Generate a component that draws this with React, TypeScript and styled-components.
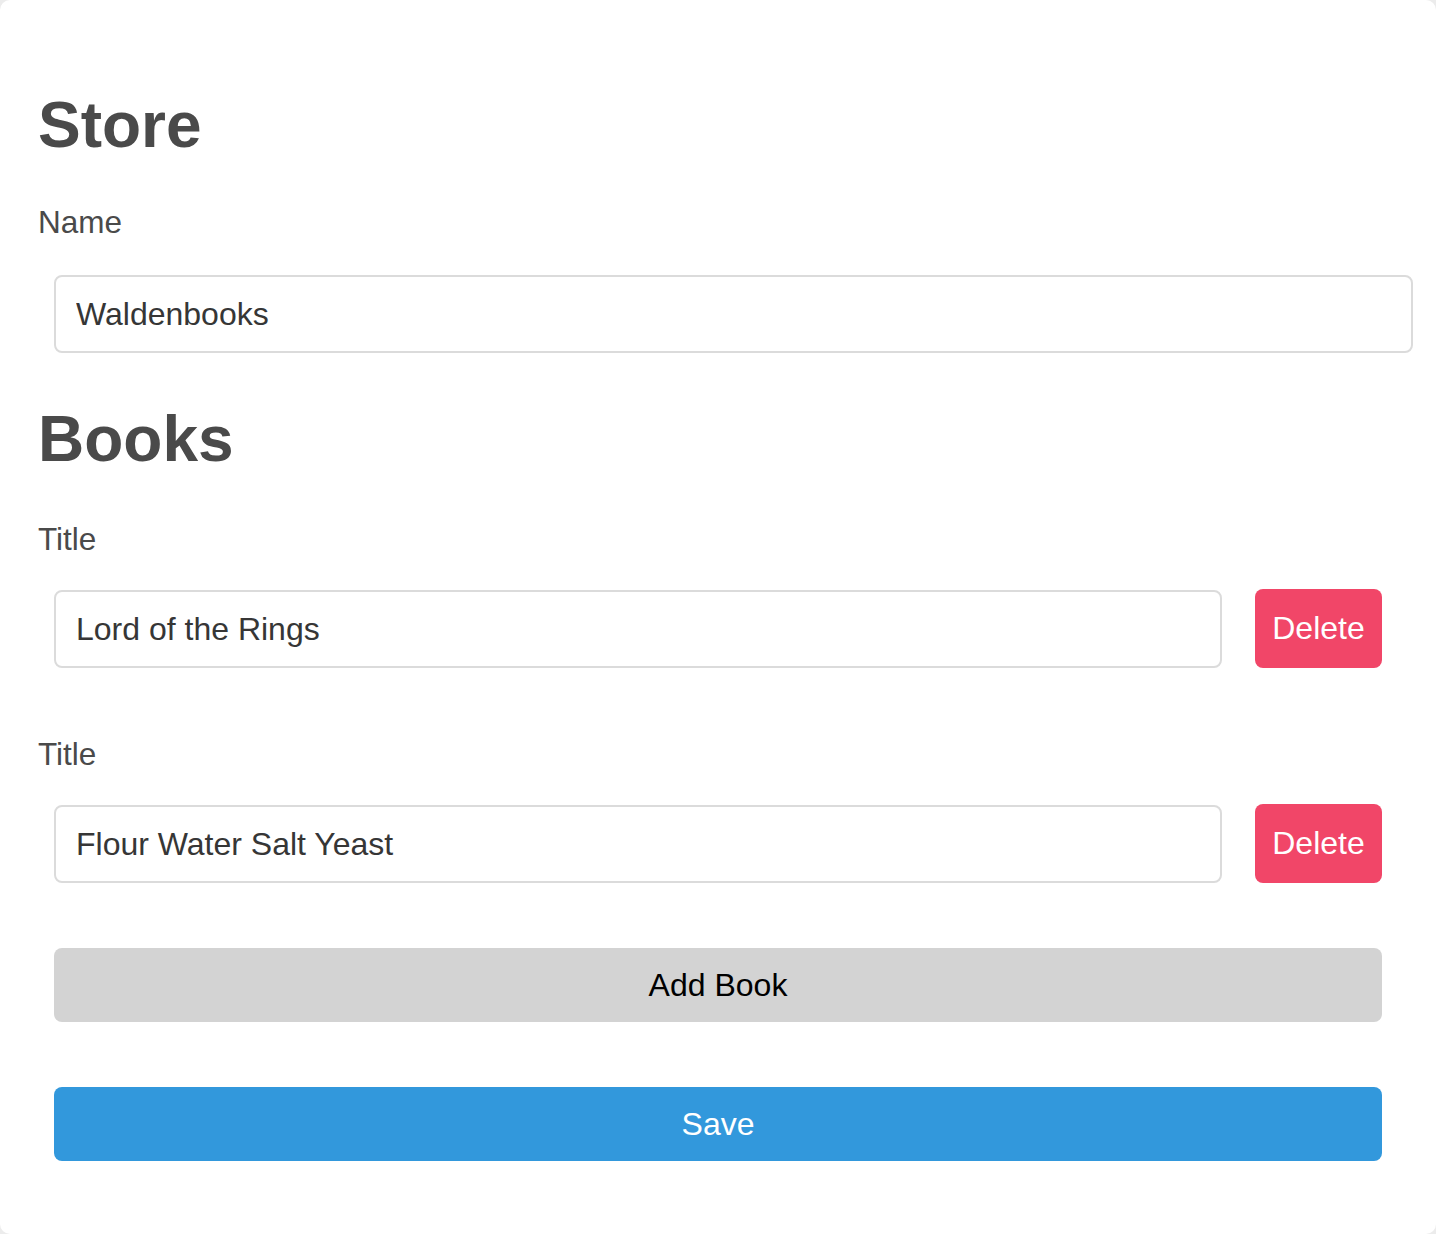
import React, { useState } from "react";
import styled, { createGlobalStyle } from "styled-components";

const GlobalStyle = createGlobalStyle`
  html, body {
    margin: 0;
    padding: 0;
    background: #ececec;
  }
  * { box-sizing: border-box; }
`;

const Card = styled.main`
  min-height: 100vh;
  background: #ffffff;
  border-radius: 10px;
  padding: 89px 23px 73px 38px;
  font-family: "Liberation Sans", Arial, Helvetica, sans-serif;
`;

const Heading = styled.h1<{ $gap: number }>`
  margin: 0 0 ${(p) => p.$gap}px;
  font-size: 64px;
  line-height: 72px;
  font-weight: 700;
  color: #4a4a4a;
`;

const Label = styled.label<{ $gap: number }>`
  display: block;
  margin: 0 0 ${(p) => p.$gap}px;
  font-size: 31.5px;
  line-height: 44px;
  color: #4a4a4a;
`;

const Indented = styled.div<{ $right: number; $gap: number }>`
  margin: 0 ${(p) => p.$right}px ${(p) => p.$gap}px 16px;
`;

const TextInput = styled.input`
  display: block;
  width: 100%;
  height: 78px;
  padding: 1px 20px 0;
  border: 2px solid #dbdbdb;
  border-radius: 8px;
  background: #fff;
  font-family: inherit;
  font-size: 32px;
  color: #363636;
  outline: none;
`;

const BookRow = styled.div`
  display: flex;
  align-items: center;
  gap: 33px;
`;

const DeleteButton = styled.button`
  flex-shrink: 0;
  height: 79px;
  width: 127px;
  padding: 0;
  border: none;
  border-radius: 8px;
  background: #f14668;
  color: #ffffff;
  font-family: inherit;
  font-size: 32px;
  cursor: pointer;
`;

const WideButton = styled.button<{ $variant: "add" | "save" }>`
  display: block;
  width: 100%;
  height: 74px;
  border: none;
  border-radius: 8px;
  background: ${(p) => (p.$variant === "save" ? "#3298dc" : "#d3d3d3")};
  color: ${(p) => (p.$variant === "save" ? "#ffffff" : "#000000")};
  font-family: inherit;
  font-size: 32px;
  cursor: pointer;
`;

export default function App() {
  const [name, setName] = useState("Waldenbooks");
  const [books, setBooks] = useState(["Lord of the Rings", "Flour Water Salt Yeast"]);

  return (
    <>
      <GlobalStyle />
      <Card>
        <Heading $gap={39}>Store</Heading>
        <Label $gap={31}>Name</Label>
        <Indented $right={0} $gap={50}>
          <TextInput value={name} onChange={(e) => setName(e.target.value)} />
        </Indented>
        <Heading $gap={42}>Books</Heading>
        {books.map((b, i) => (
          <React.Fragment key={i}>
            <Label $gap={28}>Title</Label>
            <Indented $right={31} $gap={i === books.length - 1 ? 65 : 64}>
              <BookRow>
                <TextInput
                  value={b}
                  onChange={(e) => {
                    const next = [...books];
                    next[i] = e.target.value;
                    setBooks(next);
                  }}
                />
                <DeleteButton onClick={() => setBooks(books.filter((_, j) => j !== i))}>
                  Delete
                </DeleteButton>
              </BookRow>
            </Indented>
          </React.Fragment>
        ))}
        <Indented $right={31} $gap={65}>
          <WideButton $variant="add" onClick={() => setBooks([...books, ""])}>
            Add Book
          </WideButton>
        </Indented>
        <Indented $right={31} $gap={0}>
          <WideButton $variant="save">Save</WideButton>
        </Indented>
      </Card>
    </>
  );
}
